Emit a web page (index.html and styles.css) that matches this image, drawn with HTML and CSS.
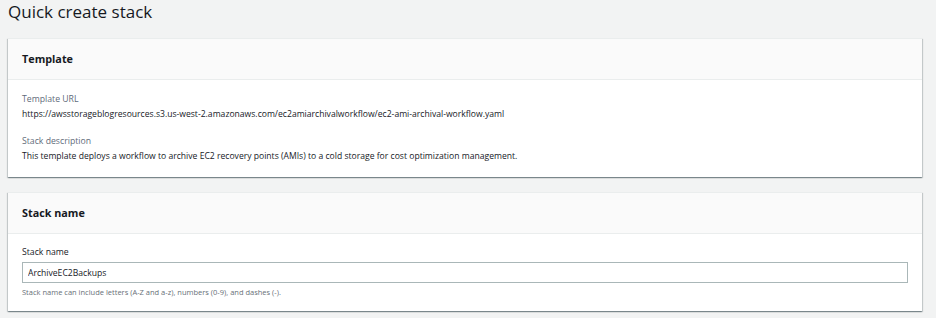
FILE: index.html
```html
<!DOCTYPE html>
<html lang="en">
<head>
    <meta charset="UTF-8">
    <meta name="viewport" content="width=device-width, initial-scale=1.0">
    <title>Quick create stack</title>
    <link rel="stylesheet" href="styles.css">
</head>
<body>
    <h1 class="page-title">Quick create stack</h1>

    <!-- Template panel -->
    <div class="panel">
        <div class="panel-header">Template</div>
        <div class="panel-body">
            <div class="field">
                <div class="field-label">Template URL</div>
                <div class="field-value">https://awsstorageblogresources.s3.us-west-2.amazonaws.com/ec2amiarchivalworkflow/ec2-ami-archival-workflow.yaml</div>
            </div>
            <div class="field">
                <div class="field-label">Stack description</div>
                <div class="field-value">This template deploys a workflow to archive EC2 recovery points (AMIs) to a cold storage for cost optimization management.</div>
            </div>
        </div>
    </div>

    <!-- Stack name panel -->
    <div class="panel">
        <div class="panel-header">Stack name</div>
        <div class="panel-body form-body">
            <label class="input-label" for="stackName">Stack name</label>
            <input id="stackName" class="text-input" type="text" value="ArchiveEC2Backups">
            <div class="input-hint">Stack name can include letters (A-Z and a-z), numbers (0-9), and dashes (-).</div>
        </div>
    </div>
</body>
</html>
```

FILE: styles.css
```css
body {
    font-family: 'Open Sans', 'Noto Sans', Arial, sans-serif;
    background-color: #f2f3f3;
    color: #16191f;
    margin: 0;
    padding: 0 14px 0 8px;
}

.page-title {
    font-size: 17px;
    font-weight: 400;
    line-height: 24px;
    margin: 0 0 14px 0;
}

.panel {
    background-color: white;
    border-top: 1px solid #eaeded;
    box-shadow: 0 1px 1px 0 rgba(0, 28, 36, 0.3), 1px 1px 1px 0 rgba(0, 28, 36, 0.15), -1px 1px 1px 0 rgba(0, 28, 36, 0.15);
    margin-bottom: 15px;
}

.panel-header {
    background-color: #fafafa;
    border-bottom: 1px solid #eaeded;
    padding: 0 14px;
    height: 40px;
    line-height: 40px;
    font-size: 10.8px;
    font-weight: 700;
}

.panel-body {
    padding: 12px 14px 13px;
}

.field + .field {
    margin-top: 12px;
}

.field-label {
    font-size: 8.7px;
    line-height: 14px;
    color: #5f6b7a;
}

.field-value {
    font-size: 8.6px;
    line-height: 16px;
}

.form-body {
    padding-top: 11px;
}

.input-label {
    display: block;
    font-size: 8.7px;
    line-height: 14px;
    margin-bottom: 3px;
}

.text-input {
    display: block;
    box-sizing: border-box;
    width: 100%;
    height: 21px;
    margin: 0;
    padding: 0 5px;
    border: 1px solid #aab7b8;
    border-radius: 0;
    font-family: inherit;
    font-size: 8.6px;
    color: #16191f;
}

.input-hint {
    font-size: 7.5px;
    line-height: 12px;
    margin-top: 3px;
    color: #687078;
}
```
